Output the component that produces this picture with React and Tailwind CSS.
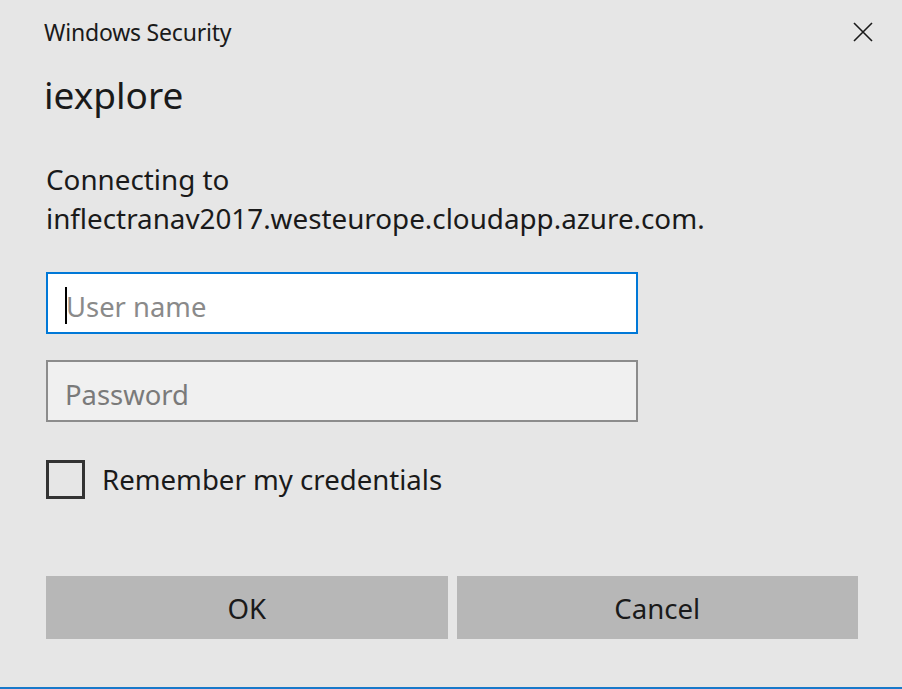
import React from 'react';

const App = () => (
    <div className="relative w-[902px] h-[689px] bg-[#e6e6e6] border-b-2 border-[#1979ca] font-['Noto_Sans',sans-serif] text-[#1a1a1a]">
        <div className="flex items-start justify-between pl-[44px] pr-[28px] pt-[18px]">
            <p className="text-[23px] leading-[28px] tracking-[-0.2px]">Windows Security</p>
            <button className="mt-[3px] w-[22px] h-[22px] flex items-center justify-center" aria-label="Close">
                <svg viewBox="0 0 20 20" className="w-[20px] h-[20px]">
                    <path d="M1 1 L19 19 M19 1 L1 19" stroke="#1a1a1a" strokeWidth="1.6" fill="none" />
                </svg>
            </button>
        </div>

        <div className="pl-[44px] pt-[29px]">
            <h1 className="text-[37px] leading-[40px] font-normal">iexplore</h1>
        </div>

        <div className="px-[46px] pt-[45px]">
            <p className="text-[27.8px] leading-[39px]">
                Connecting to
                <br />
                inflectranav2017.westeurope.cloudapp.azure.com.
            </p>

            <div className="mt-[34px] flex flex-col gap-[26px] w-[592px]">
                <div className="relative h-[62px] border-2 border-[#0078d7] bg-white flex items-center pl-[18px] pt-[7px]">
                    <span className="absolute left-[17px] top-[13px] w-[2px] h-[37px] bg-black" />
                    <span className="text-[27.4px] text-[#8a8a8a]">User name</span>
                </div>
                <div className="h-[62px] border-2 border-[#8c8c8c] bg-[#f0f0f0] flex items-center pl-[17px] pt-[7px]">
                    <span className="text-[27.4px] text-[#7a7a7a]">Password</span>
                </div>
            </div>

            <div className="mt-[38px] flex items-center gap-[17px]">
                <span className="w-[39px] h-[39px] border-[3px] border-[#333333]" />
                <span className="text-[27.6px] leading-[39px]">Remember my credentials</span>
            </div>

            <div className="mt-[77px] flex gap-[9px] w-[812px]">
                <button className="flex-1 h-[63px] pt-[3px] bg-[#b7b7b7] text-[27.6px]">OK</button>
                <button className="flex-1 h-[63px] pt-[3px] bg-[#b7b7b7] text-[27.6px]">Cancel</button>
            </div>
        </div>
    </div>
);

export default App;
